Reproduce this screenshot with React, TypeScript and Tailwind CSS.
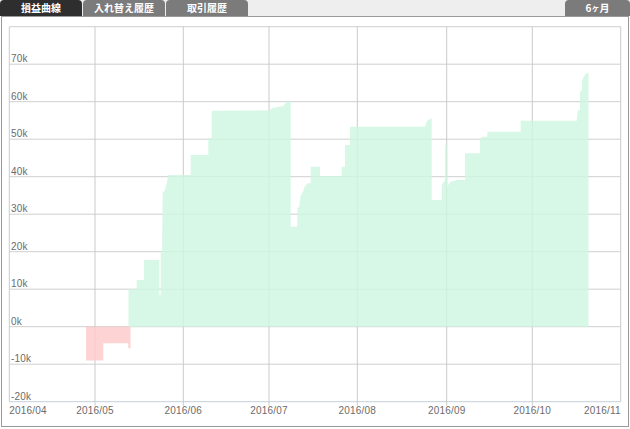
import React from "react";

const Y0 = 326.7;
const STEP = 37.5;
const yOf = (k: number) => Y0 - (k / 10) * STEP;

const green: [number, number][] = [
  [128.5, Y0], [128.5, 289.3], [136.7, 289.3], [136.7, 280], [144, 280], [144, 260],
  [159.3, 260], [159.3, 295], [160.7, 295], [160.7, 252.7], [162, 252.7], [162.7, 193.3],
  [165, 190], [166.7, 183.3], [168.3, 175], [190.7, 175], [190.7, 155], [208.3, 155],
  [208.3, 138.3], [211.7, 138.3], [211.7, 110.7], [270, 110.5], [271.7, 108.3], [283.3, 106],
  [286.7, 101.7], [290.7, 101.7], [290.7, 226.7], [297.3, 226.7], [297.3, 208.3], [299.3, 206.7],
  [300.5, 196], [303, 192], [305, 186], [308, 183.3], [310.7, 183.3], [310.7, 166.7],
  [320, 166.7], [320, 176], [341.7, 176], [341.7, 166.7], [345, 166.7], [345, 145],
  [350, 145], [350, 126.7], [425, 126.7], [426.7, 122], [428, 120], [431.7, 118.3],
  [431.7, 200], [441.7, 200], [441.7, 185], [445, 180], [445, 145], [447.3, 145],
  [447.3, 186.7], [450, 182], [456.7, 180], [465, 180], [465, 153.3], [480, 153.3],
  [480, 140], [482, 136.7], [487.3, 136.7], [487.3, 131.7], [520.7, 131.7], [520.7, 120.7],
  [576.7, 120.7], [578, 110], [580, 110], [580, 91.7], [582, 90], [582, 80],
  [585, 75], [586, 73.3], [588.5, 73.3], [588.5, Y0],
];

const red: [number, number][] = [
  [86, Y0], [130.5, Y0], [130.5, 348.3], [128.3, 348.3], [128.3, 343.3],
  [103.3, 343.3], [103.3, 360.5], [86, 360.5],
];

const pts = (p: [number, number][]) => p.map(([x, y]) => `${x},${y}`).join(" ");

const yLabels = [70, 60, 50, 40, 30, 20, 10, 0, -10, -20];
const months: { x: number; label: string; anchor: "start" | "middle" | "end" }[] = [
  { x: 9.3, label: "2016/04", anchor: "start" },
  { x: 95, label: "2016/05", anchor: "middle" },
  { x: 183.3, label: "2016/06", anchor: "middle" },
  { x: 269, label: "2016/07", anchor: "middle" },
  { x: 357.3, label: "2016/08", anchor: "middle" },
  { x: 446.7, label: "2016/09", anchor: "middle" },
  { x: 532.3, label: "2016/10", anchor: "middle" },
  { x: 620.7, label: "2016/11", anchor: "end" },
];

const LEFT = 9.3;
const RIGHT = 620.7;
const TOP = yOf(80);
const BOTTOM = yOf(-20);

function Chart() {
  return (
    <svg width={626} height={409} viewBox="2 17 626 409" className="block">
      {/* horizontal grid */}
      {[80, ...yLabels].map((k) => (
        <line key={`h${k}`} x1={LEFT} x2={RIGHT} y1={yOf(k)} y2={yOf(k)} stroke={k === -20 ? "#c3d0dc" : "#cfcfcf"} strokeWidth={1} />
      ))}
      {/* vertical grid */}
      {months.map((m) => (
        <line key={`v${m.label}`} x1={m.x} x2={m.x} y1={TOP} y2={m.x === LEFT || m.x === RIGHT ? BOTTOM : BOTTOM + 4} stroke="#cbcbcb" strokeWidth={1} />
      ))}
      <polygon points={pts(green)} fill="#cef5e2" fillOpacity={0.82} />
      <polygon points={pts(red)} fill="#fcc8c8" fillOpacity={0.8} />
      {yLabels.map((k) => (
        <text key={`t${k}`} x={11} y={yOf(k) - 2.2} fontSize={10} fill="#6b6b6b" fontFamily="'Liberation Sans', Arial, sans-serif" letterSpacing={0.2}>
          {k === 0 ? "0k" : k < 0 ? `−${-k}k`.replace("−", "-") : `${k}k`}
        </text>
      ))}
      {months.map((m) => (
        <text key={`m${m.label}`} x={m.x} y={413.5} fontSize={10} fill="#6b6b6b" textAnchor={m.anchor} fontFamily="'Liberation Sans', Arial, sans-serif" letterSpacing={0.2}>
          {m.label}
        </text>
      ))}
    </svg>
  );
}

export default function App() {
  const tabBase =
    "h-[16px] w-[82px] rounded-t-[4px] flex items-center justify-center text-white text-[10px] font-bold leading-none";
  return (
    <div className="w-[630px] h-[429px] bg-white font-['Noto_Sans_CJK_JP',sans-serif]">
      <div className="flex h-[16px] bg-[#eeeeee] items-end">
        <div className={`${tabBase} bg-[#2e2e2e]`}>損益曲線</div>
        <div className={`${tabBase} bg-[#7b7b7b] ml-[1px]`}>入れ替え履歴</div>
        <div className={`${tabBase} bg-[#7b7b7b] ml-[1px]`}>取引履歴</div>
        <div className="ml-auto h-[16px] w-[65px] rounded-t-[4px] bg-[#7b7b7b] flex items-center justify-center text-white text-[10px] font-bold leading-none">
          6<span className="text-[8px]">ヶ</span>月
        </div>
      </div>
      <div className="ml-[1px] w-[628px] h-[411px] border border-[#9a9a9a]">
        <Chart />
      </div>
    </div>
  );
}
